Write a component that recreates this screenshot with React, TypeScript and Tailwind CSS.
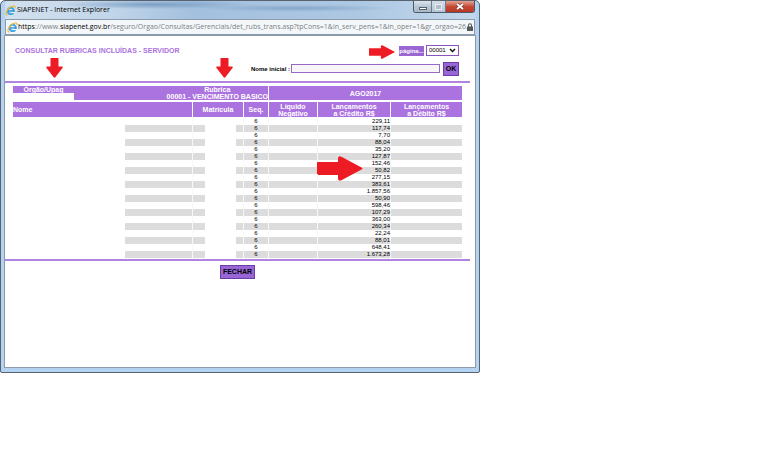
const amounts = [
  "229,11", "117,74", "7,70", "88,04", "35,20", "127,87", "152,46", "50,82", "277,15", "383,61",
  "1.857,56", "50,90", "598,46", "107,29", "363,00", "260,34", "22,24", "88,01", "648,41", "1.673,28",
];

function ExplorerIcon() {
  return (
    <svg className="h-[11px] w-[11px] shrink-0" viewBox="0 0 24 24" fill="none">
      <circle cx="12.500" cy="13" r="6.800" stroke="#3fa9e8" strokeWidth="4.400" />
      <path d="M7 13H20" stroke="#2a90d8" strokeWidth="3" />
      <path d="M14 16.500H22" stroke="#eef5fb" strokeWidth="2.500" />
      <path d="M4 22C-1 19 5 8 13 4C18 1.500 23 1 21.500 6" stroke="#f3b62b" strokeWidth="2.600" strokeLinecap="round" />
    </svg>
  );
}

function Arrow({ className, down = false }: { className: string; down?: boolean }) {
  return (
    <svg className={`pointer-events-none absolute ${className}`} viewBox={down ? "0 0 17 20" : "0 0 46 25"} preserveAspectRatio="none" fill="#ed1c24">
      {down ? (
        <path d="M4.500 0.500Q4.500 0 5 0H12Q12.500 0 12.500 0.500V8.500H16Q17.300 9 16.500 10L9.500 19Q8.500 20.300 7.500 19L0.500 10Q-0.300 9 1 8.500H4.500Z" />
      ) : (
        <path d="M0.500 6H21V2Q21.500 -0.500 24.500 0.800L44.500 11.500Q46.500 12.500 44.500 13.500L24.500 24.200Q21.500 25.500 21 23V19H0.500Q0 19 0 18.500V6.500Q0 6 0.500 6Z" />
      )}
    </svg>
  );
}

function TitleBar() {
  return (
    <header className="flex h-[18px] items-start justify-between rounded-t-[4px] bg-[radial-gradient(ellipse_at_32%_20%,#7d9fc4_0%,transparent_22%),radial-gradient(ellipse_at_62%_40%,#86a6c8_0%,transparent_24%),linear-gradient(90deg,#d3e1ee_0%,#c2d6ea_22%,#a3c0de_40%,#adc8e3_75%,#c3d8ec_100%)]">
      <div className="flex items-center gap-px pt-[3px]">
        <ExplorerIcon />
        <h1 className="font-['Open_Sans',sans-serif] text-[7px] leading-[12px] text-black">SIAPENET - Internet Explorer</h1>
      </div>
      <div className="flex h-[12px] overflow-hidden rounded-b-[3px] border border-t-0 border-[#4c5966]">
        <button aria-label="Minimizar" className="flex w-[18px] items-center justify-center border-r border-[#6d7b89] bg-linear-to-b from-[#dce5ee] via-[#b8c6d4] to-[#aab9c8]">
          <span className="mt-[3px] h-[3px] w-[8px] border border-[#59636e] bg-white" />
        </button>
        <button aria-label="Maximizar" className="flex w-[14px] items-center justify-center border-r border-[#6d7b89] bg-linear-to-b from-[#d3dee9] to-[#b4c5d6]">
          <span className="h-[6px] w-[7px] border border-[#e9eff5] bg-[#aebdcb]" />
        </button>
        <button aria-label="Fechar janela" className="flex w-[28px] items-center justify-center bg-linear-to-b from-[#e3a397] via-[#c54a37] to-[#b93521]">
          <svg className="h-[7px] w-[8px]" viewBox="0 0 8 7">
            <path d="M1 1L7 6M7 1L1 6" stroke="#71423c" strokeWidth="3" />
            <path d="M1 1L7 6M7 1L1 6" stroke="#fff" strokeWidth="1.700" />
          </svg>
        </button>
      </div>
    </header>
  );
}

function AddressBar() {
  return (
    <div className="mb-px flex h-[16px] items-center border border-[#8c9baa] bg-[#f4f7fa] px-px">
      <ExplorerIcon />
      <p className="min-w-0 flex-1 whitespace-nowrap font-['Open_Sans',sans-serif] text-[7px] leading-[12px] text-[#7b7f84]">
        <span className="text-black">https</span>://www.<span className="text-black">siapenet.gov.br</span>
        /seguro/Orgao/Consultas/Gerenciais/det_rubs_trans.asp?tpCons=1&amp;in_serv_pens=1&amp;in_oper=1&amp;gr_orgao=26.
      </p>
      <svg className="h-[8px] w-[6px] shrink-0" viewBox="0 0 6 8" fill="none">
        <path d="M1.500 4V2.500Q1.500 0.700 3 0.700T4.500 2.500V4" stroke="#55595e" strokeWidth="1.100" />
        <rect y="3.500" width="6" height="4.500" rx="0.500" fill="#55595e" />
      </svg>
    </div>
  );
}

function RubricTable() {
  return (
    <table className="w-full table-fixed border-separate border-spacing-0">
      <colgroup>
        <col />
        <col className="w-[51px]" />
        <col className="w-[25px]" />
        <col className="w-[49px]" />
        <col className="w-[73px]" />
        <col className="w-[72px]" />
      </colgroup>
      <thead className="text-[7px] leading-[7px] text-white">
        <tr className="h-[14px] *:bg-[#ab73e0] *:p-0">
          <th colSpan={3}>
            <div className="flex justify-between">
              <div className="w-[61px]">
                <div>Órgão/Upag</div>
                <div className="h-[7px] bg-white" />
              </div>
              <div className="whitespace-nowrap">
                Rubrica
                <br />
                00001 - VENCIMENTO BASICO
              </div>
            </div>
          </th>
          <th colSpan={3} className="border-l border-white">AGO2017</th>
        </tr>
        <tr className="h-[18px] *:border-t-2 *:border-b *:border-white *:bg-[#ab73e0] *:p-0">
          <th className="text-left">Nome</th>
          <th className="border-l">Matrícula</th>
          <th className="border-l">Seq.</th>
          <th className="border-l">Líquido<br />Negativo</th>
          <th className="border-l">Lançamentos<br />a Crédito R$</th>
          <th className="border-l">Lançamentos<br />a Débito R$</th>
        </tr>
      </thead>
      <tbody className="text-[6px] leading-[7px] text-black">
        {amounts.map((amount, i) => (
          <tr key={amount} className="group h-[7px] *:border-[#f8f8f8] *:p-0">
            <td>
              <div className="ml-auto h-[7px] w-[67px] group-even:bg-[#dcdcdc]" />
            </td>
            <td className="border-l">
              <div className="flex h-[7px] justify-between">
                <span className="w-[12px] group-even:bg-[#dcdcdc]" />
                <span className="w-[7px] group-even:bg-[#dcdcdc]" />
              </div>
            </td>
            <td className="border-l text-center group-even:bg-[#dcdcdc]">6</td>
            <td className="border-l group-even:bg-[#dcdcdc]" />
            <td className="relative border-l text-right group-even:bg-[#dcdcdc]">
              {amount}
              {i === 7 && <Arrow className="-left-px -top-[11px] h-[25px] w-[46px]" />}
            </td>
            <td className="border-l group-even:bg-[#dcdcdc]" />
          </tr>
        ))}
      </tbody>
    </table>
  );
}

export default function App() {
  return (
    <div className="min-h-screen bg-white">
      <div className="w-5/8 min-w-[400px] rounded-t-[5px] rounded-b-[2px] border border-[#59636d] bg-[#b4d3f2] px-[4px] pb-[5px] font-['Liberation_Sans',Arial,sans-serif]">
        <TitleBar />
        <AddressBar />
        <main className="bg-white pr-[5px] pb-[88px] ring-1 ring-[#8b9bab]">
          <div className="flex h-[20px] items-end justify-between pl-[10px] pr-[11px]">
            <h2 className="pb-px text-[7px] leading-[9px] font-bold text-[#ab73e0]">CONSULTAR RUBRICAS INCLUÍDAS - SERVIDOR</h2>
            <div className="relative flex items-center gap-[2px]">
              <Arrow className="-left-[30px] top-0 h-[14px] w-[26px]" />
              <button className="h-[10px] w-[25px] bg-[#9966d2] text-[6px] leading-[10px] font-bold text-white">página...</button>
              <div className="relative">
                <select aria-label="Página" className="block h-[11px] w-[33px] appearance-none border border-[#8b55bd] bg-white pl-[2px] text-[6px] leading-[9px] text-black">
                  <option>00001</option>
                </select>
                <svg className="pointer-events-none absolute top-[3px] right-[3px] h-[5px] w-[7px]" viewBox="0 0 7 5" fill="none">
                  <path d="M1 1L3.500 3.500L6 1" stroke="#111" strokeWidth="1.500" />
                </svg>
              </div>
            </div>
          </div>
          <div className="relative flex h-[25px] items-center justify-end pr-[11px]">
            <Arrow down className="left-[41px] top-[2px] h-[20px] w-[17px]" />
            <Arrow down className="left-[211px] top-[2px] h-[20px] w-[17px]" />
            <label htmlFor="nome" className="text-[6px] leading-[8px] font-bold text-black">Nome inicial :</label>
            <input id="nome" className="ml-px h-[9px] w-[149px] border border-[#9a68c9] bg-[#f8f6f8] px-[2px] text-[6px]" />
            <button className="ml-[3px] h-[14px] w-[16px] border border-[#6b3da5] bg-[#9966d8] text-[7px] leading-[12px] font-bold text-black">OK</button>
          </div>
          <div className="border-t-2 border-b-2 border-t-[#b384df] border-b-[#b384df] pt-[3px] pb-px">
            <div className="pl-[8px] pr-[8px]">
              <RubricTable />
            </div>
          </div>
          <div className="flex justify-center pt-[4px]">
            <button className="h-[14px] w-[35px] border border-[#6b3da5] bg-[#9966d8] text-[7px] leading-[12px] font-bold text-black">FECHAR</button>
          </div>
        </main>
      </div>
    </div>
  );
}
